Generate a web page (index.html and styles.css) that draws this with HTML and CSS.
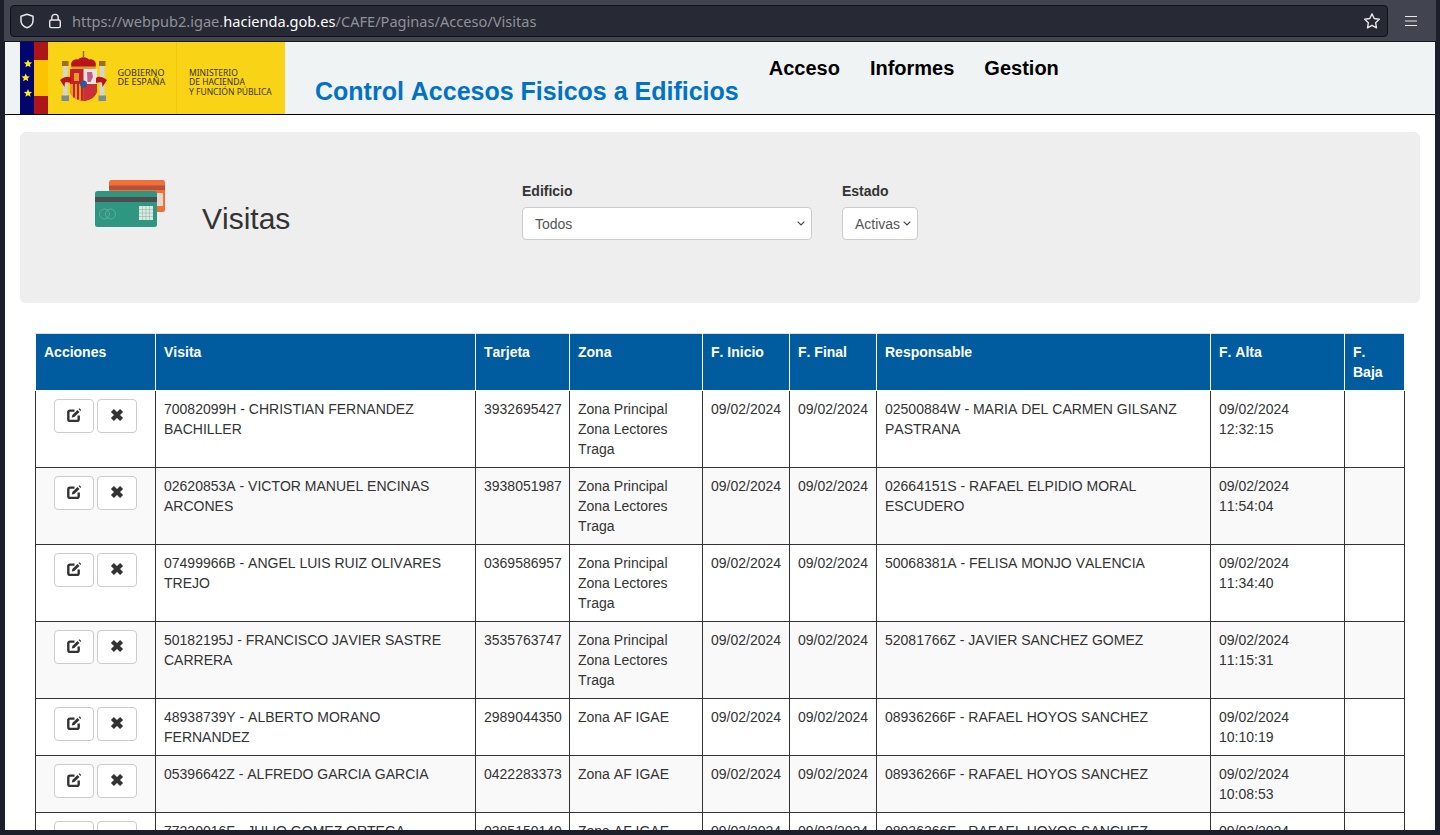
FILE: index.html
```html
<!DOCTYPE html>
<html lang="es">
<head>
    <meta charset="UTF-8">
    <meta name="viewport" content="width=device-width, initial-scale=1.0">
    <title>Control Accesos Fisicos a Edificios</title>
    <link rel="stylesheet" href="styles.css">
</head>
<body>
    <svg class="icon-defs" width="0" height="0">
        <symbol id="icon-edit" viewBox="0 0 14 14">
            <path d="M7.500 2.600H3C2 2.600 1.300 3.300 1.300 4.300v7c0 1 .7 1.700 1.700 1.700h7c1 0 1.700-.7 1.700-1.700V7.500" fill="none" stroke="currentColor" stroke-width="2.400"/>
            <path d="M4.800 9.600l.5-2.500L10.500 2l2 2-5.200 5.100z" fill="currentColor"/>
            <path d="M11.500 1l1-.8 1.700 1.700-.8 1z" fill="currentColor"/>
        </symbol>
        <symbol id="icon-remove" viewBox="0 0 14 14">
            <path d="M2.400 2.400l9.200 9.200M11.600 2.400l-9.200 9.200" fill="none" stroke="currentColor" stroke-width="4.200"/>
        </symbol>
    </svg>

    <div class="browser-bar">
        <div class="url-bar">
            <svg class="url-icon" width="16" height="16" viewBox="0 0 16 16"><path d="M8 1.200l6 2v4.600c0 3.400-2.600 5.900-6 7-3.400-1.100-6-3.600-6-7V3.200z" fill="none" stroke="#e8e8ea" stroke-width="1.500" stroke-linejoin="round"/></svg>
            <svg class="url-icon lock" width="14" height="16" viewBox="0 0 14 16"><path d="M3.800 7V4.400C3.800 2.600 5.200 1.400 7 1.400s3.200 1.200 3.200 3V7" fill="none" stroke="#e8e8ea" stroke-width="1.400"/><rect x="1.700" y="7" width="10.600" height="7.600" rx="1.400" fill="none" stroke="#e8e8ea" stroke-width="1.400"/></svg>
            <span class="url-text">https://webpub2.igae.<b>hacienda.gob.es</b>/CAFE/Paginas/Acceso/Visitas</span>
            <svg class="star" width="18" height="18" viewBox="0 0 18 18"><path d="M9 1.800l2.200 4.700 5.100.7-3.700 3.500.9 5.100L9 13.300l-4.500 2.500.9-5.100-3.700-3.500 5.100-.7z" fill="none" stroke="#e8e8ea" stroke-width="1.400" stroke-linejoin="round"/></svg>
        </div>
        <svg class="menu" width="14" height="12" viewBox="0 0 14 12"><path d="M1 1.500h12M1 6h12M1 10.500h12" stroke="#e8e8ea" stroke-width="1.200"/></svg>
    </div>

    <div class="page">
        <header class="site-header">
            <svg class="logo" width="265" height="72" viewBox="0 0 265 72">
                <rect width="265" height="72" fill="#f8d316"/>
                <rect width="14" height="72" fill="#02056e"/>
                <rect x="14" width="14" height="72" fill="#fdc300"/>
                <rect x="14" width="14" height="18" fill="#ad1519"/>
                <rect x="14" y="54" width="14" height="18" fill="#ad1519"/>
                <path d="M8 17.500l1.200 2.700 2.900.3-2.200 1.900.7 2.900L8 23.800l-2.600 1.500.7-2.900-2.200-1.900 2.900-.3z" fill="#ffec1a"/>
                <path d="M5.700 31.500l1.200 2.700 2.900.3-2.200 1.900.7 2.900-2.600-1.500-2.600 1.500.7-2.900-2.200-1.900 2.900-.3z" fill="#ffec1a"/>
                <path d="M8 47l1.200 2.700 2.900.3-2.200 1.900.7 2.900L8 53.300l-2.600 1.500.7-2.900-2.200-1.900 2.900-.3z" fill="#ffec1a"/>
                <rect x="156" width="1" height="72" fill="#f2c50c"/>
                <!-- escudo -->
                <path d="M52 26c-3-6 2-10 6-8.500 2-2 4-2.300 5.500-2.300s3.500.3 5.500 2.300c4-1.500 9 2.500 6 8.500z" fill="#b9141c"/>
                <path d="M51.500 24.500h24V27h-24z" fill="#d0a030"/>
                <path d="M62.800 9h1.400v7h-1.400z" fill="#8a6d1e"/>
                <path d="M50 27h27v21c0 6-6 10-13.500 11C56 58 50 54 50 48z" fill="#c8202a"/>
                <path d="M63.500 27H77v15H63.500z" fill="#e6e3de"/>
                <path d="M50 42h13.500v17C56 58 50 54 50 48z" fill="#e0a020"/>
                <path d="M53 42h2v13.500h-2zM57 42h2v15.500h-2zM61 42h2v16.500h-2z" fill="#c8202a"/>
                <path d="M63.500 42H77v6c0 6-6 10-13.500 11z" fill="#c8303a"/>
                <path d="M67 30h5l1 5-2.500 5h-3z" fill="#c45a8a"/>
                <path d="M54 31h5v8h-5z" fill="#e0a020"/>
                <circle cx="63.500" cy="42" r="3.500" fill="#2a5a9c"/>
                <path d="M43 24h4.500v30H43zM80 24h4.500v30H80z" fill="#d5d5d0"/>
                <path d="M42 19h6.500v5H42zM79 19h6.500v5H79z" fill="#9c6c2a"/>
                <path d="M41.500 53.500H49V59h-7.500zM78.500 53.500H86V59h-7.500z" fill="#7c8c94"/>
                <path d="M40 38c5-4 9-4 11-2v5c-2-1-4-1-6-.5L44.500 45zM87 38c-5-4-9-4-11-2v5c2-1 4-1 6-.5l.5 4.500z" fill="#b9141c"/>
                <text class="logo-text" x="97.500" y="34">GOBIERNO</text>
                <text class="logo-text" x="97.500" y="43">DE ESPAÑA</text>
                <text class="logo-text small" x="169" y="33.500">MINISTERIO</text>
                <text class="logo-text small" x="169" y="43">DE HACIENDA</text>
                <text class="logo-text small" x="169" y="52.500">Y FUNCIÓN PÚBLICA</text>
            </svg>
            <h1 class="site-title">Control Accesos Fisicos a Edificios</h1>
            <nav class="site-nav">
                <a href="#">Acceso</a>
                <a href="#">Informes</a>
                <a href="#">Gestion</a>
            </nav>
        </header>

        <section class="panel">
            <div class="panel-head">
                <svg class="card-icon" width="70" height="48" viewBox="0 0 70 48">
                    <rect x="14" width="56" height="32" rx="2.500" fill="#f26f36"/>
                    <rect x="14" y="5.500" width="56" height="4.500" fill="#b6513a"/>
                    <rect x="62" y="13" width="6" height="13" fill="#e8d8cc"/>
                    <rect y="11" width="62" height="36" rx="2.500" fill="#2f9781"/>
                    <rect y="17" width="62" height="5" fill="#4d4d4f"/>
                    <rect x="44" y="26" width="14" height="14" fill="#dce8e2"/>
                    <path d="M47.500 26v14M51 26v14M54.500 26v14M44 29.500h14M44 33h14M44 36.500h14" stroke="#8fb8aa" stroke-width=".6"/>
                    <circle cx="9.500" cy="34" r="5" fill="none" stroke="#6fb8a6" stroke-width=".7"/>
                    <circle cx="15.500" cy="34" r="5" fill="none" stroke="#6fb8a6" stroke-width=".7"/>
                </svg>
                <h2 class="panel-title">Visitas</h2>
            </div>
            <div class="filter">
                <label for="edificio">Edificio</label>
                <select id="edificio" class="select-wide">
                    <option>Todos</option>
                </select>
            </div>
            <div class="filter">
                <label for="estado">Estado</label>
                <select id="estado" class="select-narrow">
                    <option>Activas</option>
                </select>
            </div>
        </section>

        <table class="visitas">
            <thead>
                <tr>
                    <th class="col-acciones">Acciones</th>
                    <th class="col-visita">Visita</th>
                    <th class="col-tarjeta">Tarjeta</th>
                    <th class="col-zona">Zona</th>
                    <th class="col-fecha">F. Inicio</th>
                    <th class="col-fecha">F. Final</th>
                    <th class="col-responsable">Responsable</th>
                    <th class="col-alta">F. Alta</th>
                    <th class="col-baja">F. Baja</th>
                </tr>
            </thead>
            <tbody>
                <tr>
                    <td><div class="acciones"><button type="button"><svg width="14" height="14"><use href="#icon-edit"/></svg></button><button type="button"><svg width="14" height="14"><use href="#icon-remove"/></svg></button></div></td>
                    <td>70082099H - CHRISTIAN FERNANDEZ BACHILLER</td>
                    <td>3932695427</td>
                    <td>Zona Principal<br>Zona Lectores<br>Traga</td>
                    <td>09/02/2024</td>
                    <td>09/02/2024</td>
                    <td>02500884W - MARIA DEL CARMEN GILSANZ PASTRANA</td>
                    <td>09/02/2024<br>12:32:15</td>
                    <td></td>
                </tr>
                <tr>
                    <td><div class="acciones"><button type="button"><svg width="14" height="14"><use href="#icon-edit"/></svg></button><button type="button"><svg width="14" height="14"><use href="#icon-remove"/></svg></button></div></td>
                    <td>02620853A - VICTOR MANUEL ENCINAS ARCONES</td>
                    <td>3938051987</td>
                    <td>Zona Principal<br>Zona Lectores<br>Traga</td>
                    <td>09/02/2024</td>
                    <td>09/02/2024</td>
                    <td>02664151S - RAFAEL ELPIDIO MORAL ESCUDERO</td>
                    <td>09/02/2024<br>11:54:04</td>
                    <td></td>
                </tr>
                <tr>
                    <td><div class="acciones"><button type="button"><svg width="14" height="14"><use href="#icon-edit"/></svg></button><button type="button"><svg width="14" height="14"><use href="#icon-remove"/></svg></button></div></td>
                    <td>07499966B - ANGEL LUIS RUIZ OLIVARES TREJO</td>
                    <td>0369586957</td>
                    <td>Zona Principal<br>Zona Lectores<br>Traga</td>
                    <td>09/02/2024</td>
                    <td>09/02/2024</td>
                    <td>50068381A - FELISA MONJO VALENCIA</td>
                    <td>09/02/2024<br>11:34:40</td>
                    <td></td>
                </tr>
                <tr>
                    <td><div class="acciones"><button type="button"><svg width="14" height="14"><use href="#icon-edit"/></svg></button><button type="button"><svg width="14" height="14"><use href="#icon-remove"/></svg></button></div></td>
                    <td>50182195J - FRANCISCO JAVIER SASTRE CARRERA</td>
                    <td>3535763747</td>
                    <td>Zona Principal<br>Zona Lectores<br>Traga</td>
                    <td>09/02/2024</td>
                    <td>09/02/2024</td>
                    <td>52081766Z - JAVIER SANCHEZ GOMEZ</td>
                    <td>09/02/2024<br>11:15:31</td>
                    <td></td>
                </tr>
                <tr>
                    <td><div class="acciones"><button type="button"><svg width="14" height="14"><use href="#icon-edit"/></svg></button><button type="button"><svg width="14" height="14"><use href="#icon-remove"/></svg></button></div></td>
                    <td>48938739Y - ALBERTO MORANO FERNANDEZ</td>
                    <td>2989044350</td>
                    <td>Zona AF IGAE</td>
                    <td>09/02/2024</td>
                    <td>09/02/2024</td>
                    <td>08936266F - RAFAEL HOYOS SANCHEZ</td>
                    <td>09/02/2024<br>10:10:19</td>
                    <td></td>
                </tr>
                <tr>
                    <td><div class="acciones"><button type="button"><svg width="14" height="14"><use href="#icon-edit"/></svg></button><button type="button"><svg width="14" height="14"><use href="#icon-remove"/></svg></button></div></td>
                    <td>05396642Z - ALFREDO GARCIA GARCIA</td>
                    <td>0422283373</td>
                    <td>Zona AF IGAE</td>
                    <td>09/02/2024</td>
                    <td>09/02/2024</td>
                    <td>08936266F - RAFAEL HOYOS SANCHEZ</td>
                    <td>09/02/2024<br>10:08:53</td>
                    <td></td>
                </tr>
                <tr>
                    <td><div class="acciones"><button type="button"><svg width="14" height="14"><use href="#icon-edit"/></svg></button><button type="button"><svg width="14" height="14"><use href="#icon-remove"/></svg></button></div></td>
                    <td>77220016F - JULIO GOMEZ ORTEGA</td>
                    <td>0385150140</td>
                    <td>Zona AF IGAE</td>
                    <td>09/02/2024</td>
                    <td>09/02/2024</td>
                    <td>08936266F - RAFAEL HOYOS SANCHEZ</td>
                    <td>09/02/2024</td>
                    <td></td>
                </tr>
            </tbody>
        </table>
    </div>
</body>
</html>
```

FILE: styles.css
```css
/* General Style */
html, body {
    height: 100%;
}
body {
    margin: 0;
    height: 835px;
    overflow: hidden;
    display: flex;
    flex-direction: column;
    padding: 0 5px 5px 4px;
    box-sizing: border-box;
    background-color: #1c1e29;
    font-family: 'Liberation Sans', Arial, sans-serif;
    font-size: 14px;
    font-kerning: none;
    color: #333;
}
.icon-defs {
    position: absolute;
}

/* Browser bar */
.browser-bar {
    flex: none;
    height: 42px;
    margin: 0 -1px 0 0;
    padding: 5px 0 5px 6px;
    box-sizing: border-box;
    display: flex;
    align-items: center;
    background-color: #42444f;
    border-bottom: 1px solid #16171d;
}
.url-bar {
    width: 1378px;
    height: 32px;
    flex: none;
    box-sizing: border-box;
    display: flex;
    align-items: center;
    padding: 0 6px 0 8px;
    background-color: #272934;
    border: 1px solid #111218;
    border-radius: 4px;
}
.url-icon {
    flex: none;
}
.lock {
    margin-left: 13px;
}
.url-text {
    margin-left: 10px;
    font-family: 'Noto Sans', sans-serif;
    font-size: 14.6px;
    color: #8f9199;
}
.url-text b {
    font-weight: normal;
    color: #fff;
}
.star {
    margin-left: auto;
}
.menu {
    margin-left: 16px;
}

/* Page */
.page {
    flex: 1;
    min-height: 0;
    overflow: hidden;
    margin-left: 1px;
    background-color: #fff;
}
.site-header {
    height: 73px;
    box-sizing: border-box;
    display: flex;
    padding-left: 15px;
    background-color: #eff3f4;
    border-bottom: 1px solid #000;
}
.logo {
    flex: none;
}
.logo-text {
    font-family: 'Noto Sans', sans-serif;
    font-size: 9px;
    fill: #3a3420;
}
.logo-text.small {
    font-size: 8.5px;
}
.site-title {
    margin: 34px 0 0 30px;
    font-size: 25px;
    line-height: 30px;
    font-weight: bold;
    color: #0272c4;
    white-space: nowrap;
}
.site-nav {
    display: flex;
    gap: 30px;
    margin: 15px 0 0 30px;
}
.site-nav a {
    font-size: 20px;
    line-height: 23px;
    font-weight: bold;
    color: #000;
    text-decoration: none;
}

/* Filter panel */
.panel {
    display: flex;
    gap: 30px;
    height: 171px;
    box-sizing: border-box;
    margin: 17px 15px 0;
    padding: 48px 0 0 75px;
    background-color: #eee;
    border-radius: 6px;
}
.panel-head {
    display: flex;
    align-items: flex-start;
    gap: 37px;
    width: 397px;
}
.panel-title {
    margin: 22px 0 0;
    font-size: 30px;
    line-height: 34px;
    font-weight: normal;
    color: #333;
}
.filter label {
    display: block;
    margin: 1px 0 6px;
    font-weight: bold;
    line-height: 20px;
}
.filter select {
    display: block;
    height: 33px;
    box-sizing: border-box;
    padding: 0 12px;
    font-family: inherit;
    font-size: 14px;
    color: #555;
    border: 1px solid #ccc;
    border-radius: 4px;
    appearance: none;
    background: #fff url("data:image/svg+xml,%3Csvg xmlns='http://www.w3.org/2000/svg' width='8' height='5'%3E%3Cpath d='M.7.7l3.300 3.300 3.300-3.300' fill='none' stroke='%23444' stroke-width='1.200'/%3E%3C/svg%3E") no-repeat right 6px center;
}
.select-wide {
    width: 290px;
}
.select-narrow {
    width: 76px;
}

/* Table */
.visitas {
    table-layout: fixed;
    width: 1370px;
    margin: 30px 0 0 30px;
    border-collapse: collapse;
    line-height: 20px;
}
.visitas th, .visitas td {
    box-sizing: border-box;
    padding: 8px;
    vertical-align: top;
}
.visitas th {
    text-align: left;
    font-weight: bold;
    color: #fff;
    background-color: #005b9f;
    border: 1px solid #fff;
    border-top-color: #ddd;
}
.visitas td {
    border: 1px solid #333;
}
.visitas tbody tr:nth-child(even) {
    background-color: #f9f9f9;
}
.col-acciones { width: 120px; }
.col-visita { width: 320px; }
.col-tarjeta { width: 94px; }
.col-zona { width: 133px; }
.col-fecha { width: 87px; }
.col-responsable { width: 334px; }
.col-alta { width: 134px; }
.col-baja { width: 60px; }

.acciones {
    display: flex;
    justify-content: center;
    gap: 3px;
}
.acciones button {
    width: 40px;
    height: 34px;
    padding: 0 0 2px;
    display: flex;
    align-items: center;
    justify-content: center;
    color: #333;
    background-color: #fff;
    border: 1px solid #ccc;
    border-radius: 4px;
    cursor: pointer;
}
```
